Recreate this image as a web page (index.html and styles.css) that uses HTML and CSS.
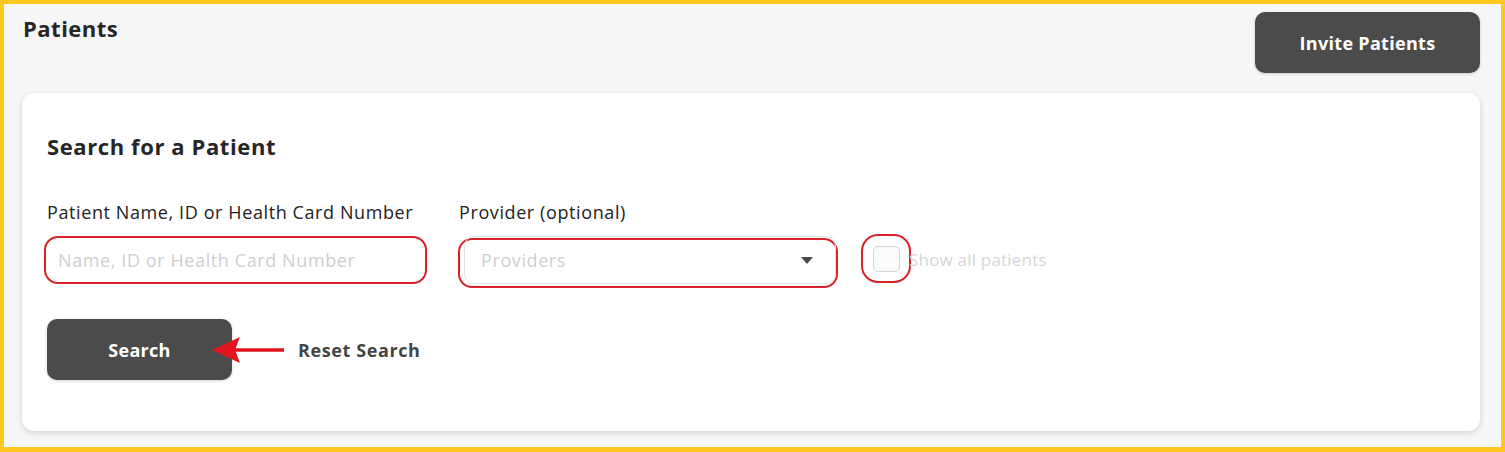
FILE: index.html
```html
<!DOCTYPE html>
<html>
<head>
<meta charset="utf-8">
<link rel="stylesheet" href="styles.css">
</head>
<body>
<div class="frame">
  <div class="header">
    <h1 class="page-title">Patients</h1>
    <button class="btn btn-invite">Invite Patients</button>
  </div>
  <div class="card">
    <h2 class="card-title">Search for a Patient</h2>
    <div class="fields">
      <div class="field field-name">
        <label class="label">Patient Name, ID or Health Card Number</label>
        <input class="input" type="text" placeholder="Name, ID or Health Card Number">
      </div>
      <div class="field field-provider">
        <label class="label">Provider (optional)</label>
        <div class="select-ring">
          <div class="select">
            <span class="select-placeholder">Providers</span>
            <svg class="caret" width="12" height="7" viewBox="0 0 12 7"><path d="M0 0 L12 0 L6 7 Z" fill="#4a4a4a"/></svg>
          </div>
        </div>
      </div>
      <div class="check-row">
        <div class="check-ring"><span class="checkbox"></span></div>
        <span class="check-label">Show all patients</span>
      </div>
    </div>
    <div class="actions">
      <button class="btn btn-search">Search</button>
      <svg class="arrow" width="74" height="30" viewBox="0 0 74 30"><path d="M72 15 L22 15" stroke="#e3141d" stroke-width="3.5"/><path d="M0 15 L28 2 L23 15 L28 28 Z" fill="#e3141d"/></svg>
      <a class="reset">Reset Search</a>
    </div>
  </div>
</div>
</body>
</html>
```
FILE: styles.css
```css
* { box-sizing: border-box; }
html, body { margin: 0; padding: 0; }
body {
  width: 1505px;
  height: 452px;
  font-family: "Open Sans", "Liberation Sans", sans-serif;
  color: #222;
}
.frame {
  width: 1505px;
  height: 452px;
  border: 4px solid #fdc921;
  border-bottom-width: 5px;
  background: #f7f7f7;
  padding: 8px 21px 0 18px;
}
.header {
  display: flex;
  justify-content: space-between;
  align-items: flex-start;
  height: 81px;
}
.page-title {
  margin: 0 0 0 1px;
  font-size: 22px;
  font-weight: 700;
  letter-spacing: 0.5px;
  color: #262626;
  line-height: 32px;
}
.btn {
  border: none;
  background: #4b4b4b;
  color: #fff;
  font-family: inherit;
  font-weight: 700;
  font-size: 18px;
  letter-spacing: 0.3px;
  border-radius: 10px;
  cursor: pointer;
}
.btn-invite {
  width: 225px;
  height: 61px;
  box-shadow: 0 1px 3px rgba(0,0,0,0.2);
}
.card {
  background: #fff;
  border-radius: 12px;
  box-shadow: 0 2px 6px rgba(0,0,0,0.15);
  height: 338px;
  padding: 36px 25px 0 25px;
}
.card-title {
  margin: 0;
  font-size: 22px;
  font-weight: 700;
  letter-spacing: 0.6px;
  line-height: 34px;
  color: #262626;
}
.fields {
  display: flex;
  align-items: flex-start;
  margin-top: 37px;
}
.field { display: flex; flex-direction: column; }
.field-name { width: 383px; margin-left: -3px; }
.field-provider { width: 380px; margin-left: 31px; }
.label {
  font-size: 18px;
  letter-spacing: 0.6px;
  line-height: 24px;
  color: #222;
  margin-bottom: 12px;
  padding-left: 3px;
}
.field-provider .label { padding-left: 1px; }
.input {
  height: 48px;
  border: 2px solid #d8232a;
  border-radius: 14px;
  padding: 0 12px;
  font-family: inherit;
  font-size: 18px;
  letter-spacing: 0.6px;
  color: #222;
  outline: none;
}
.input::placeholder { color: #cfcfcf; }
.select-ring {
  height: 50px;
  border: 2px solid #d8232a;
  border-radius: 14px;
  position: relative;
  margin-top: 2px;
}
.select {
  position: absolute;
  inset: -4px 0 2px 4px;
  border: 1px solid #e3e3e3;
  border-radius: 10px;
  display: flex;
  align-items: center;
  justify-content: space-between;
  padding: 0 22px 0 16px;
}
.select-placeholder { font-size: 18px; letter-spacing: 0.6px; color: #cfcfcf; margin-top: -1px; }
.caret { margin-top: 1px; }
.check-row {
  display: flex;
  align-items: center;
  margin-left: 23px;
  margin-top: 34px;
}
.check-ring {
  width: 50px;
  height: 49px;
  border: 2.5px solid #d8232a;
  border-radius: 17px;
  display: flex;
  align-items: center;
  justify-content: center;
}
.checkbox {
  width: 27px;
  height: 26px;
  border: 1px solid #d6d3d0;
  border-radius: 5px;
  background: #fbfbfb;
}
.check-label {
  font-size: 17px;
  letter-spacing: 0.2px;
  color: #d6d6d6;
  margin-left: -2px;
  margin-top: 1px;
}
.actions {
  display: flex;
  align-items: center;
  margin-top: 31px;
  position: relative;
}
.btn-search {
  width: 185px;
  height: 61px;
  box-shadow: 0 1px 3px rgba(0,0,0,0.2);
}
.arrow {
  position: absolute;
  left: 165px;
  top: 16px;
}
.reset {
  margin-left: 66px;
  font-size: 18px;
  font-weight: 700;
  letter-spacing: 0.6px;
  color: #444;
}
```
